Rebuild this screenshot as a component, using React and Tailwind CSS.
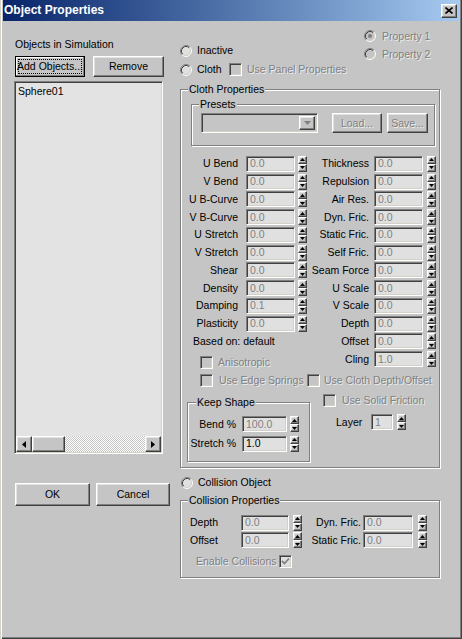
import React from 'react';

const FONT = "font-['Liberation_Sans',Arial,sans-serif]";
const raised =
  'border border-t-white border-l-white border-r-[#404040] border-b-[#404040] shadow-[inset_-1px_-1px_0_#808080,inset_1px_1px_0_#e3e3e3]';
const sunken =
  'border border-t-[#808080] border-l-[#808080] border-r-white border-b-white shadow-[inset_1px_1px_0_#404040,inset_-1px_-1px_0_#d4d0c8]';
const dim = 'text-[#808080] [text-shadow:1px_1px_0_#ececec]';
const group =
  'border border-[#808080] shadow-[inset_1px_1px_0_#fff,1px_1px_0_#fff]';

function Radio({ on, disabled }) {
  return (
    <svg width="12" height="12" viewBox="0 0 12 12" className="shrink-0">
      <circle cx="6" cy="6" r="5" fill={disabled ? '#c5c5c5' : '#e0e0e0'} />
      <path d="M2.11 9.89A5.5 5.5 0 0 1 9.89 2.11" stroke="#808080" fill="none" />
      <path d="M9.89 2.11A5.5 5.5 0 0 1 2.11 9.89" stroke="#fff" fill="none" />
      <path d="M2.82 9.18A4.5 4.5 0 0 1 9.18 2.82" stroke="#404040" fill="none" />
      <path d="M9.18 2.82A4.5 4.5 0 0 1 2.82 9.18" stroke="#d4d0c8" fill="none" />
      {on && <circle cx="6" cy="6" r="2" fill={disabled ? '#808080' : '#000'} />}
    </svg>
  );
}

function Check({ checked, light }) {
  return (
    <div
      className={`flex h-[13px] w-[13px] shrink-0 items-center justify-center ${sunken} ${
        light ? 'bg-[#e0e0e0]' : 'bg-[#c5c5c5]'
      }`}
    >
      {checked && (
        <svg width="9" height="9" viewBox="0 0 9 9">
          <path d="M1 4l2.5 2.5L8 1.5" stroke="#808080" strokeWidth="1.8" fill="none" />
        </svg>
      )}
    </div>
  );
}

function Spin() {
  return (
    <div className="flex h-[16px] w-[9px] shrink-0 flex-col">
      <div className={`flex h-[8px] items-center justify-center bg-[#c5c5c5] ${raised}`}>
        <svg width="5" height="3" viewBox="0 0 5 3">
          <path d="M2.5 0L5 3H0z" fill="#000" />
        </svg>
      </div>
      <div className={`flex h-[8px] items-center justify-center bg-[#c5c5c5] ${raised}`}>
        <svg width="5" height="3" viewBox="0 0 5 3">
          <path d="M0 0h5L2.5 3z" fill="#000" />
        </svg>
      </div>
    </div>
  );
}

function Field({ value, className = 'w-[49px]', dark }) {
  return (
    <div
      className={`flex h-[16px] shrink-0 items-center bg-[#e0e0e0] pl-[3px] ${sunken} ${className} ${
        dark ? 'text-black' : 'text-[#808080]'
      }`}
    >
      {value}
    </div>
  );
}

function Btn({ children, className = '', disabled }) {
  return (
    <div
      className={`flex shrink-0 items-center justify-center whitespace-nowrap bg-[#c5c5c5] ${raised} ${className} ${
        disabled ? dim : ''
      }`}
    >
      {children}
    </div>
  );
}

const leftRows = [
  ['U Bend', '0.0'],
  ['V Bend', '0.0'],
  ['U B-Curve', '0.0'],
  ['V B-Curve', '0.0'],
  ['U Stretch', '0.0'],
  ['V Stretch', '0.0'],
  ['Shear', '0.0'],
  ['Density', '0.0'],
  ['Damping', '0.1'],
  ['Plasticity', '0.0'],
];

const rightRows = [
  ['Thickness', '0.0'],
  ['Repulsion', '0.0'],
  ['Air Res.', '0.0'],
  ['Dyn. Fric.', '0.0'],
  ['Static Fric.', '0.0'],
  ['Self Fric.', '0.0'],
  ['Seam Force', '0.0'],
  ['U Scale', '0.0'],
  ['V Scale', '0.0'],
  ['Depth', '0.0'],
  ['Offset', '0.0'],
  ['Cling', '1.0'],
];

export default function App() {
  return (
    <div
      className={`${FONT} h-[639px] w-[462px] overflow-hidden bg-[#c5c5c5] text-[10.5px] leading-[13px] text-black shadow-[inset_1px_0_0_#d4d0c8,inset_2px_0_0_#fff,inset_-1px_-1px_0_#404040,inset_-2px_-2px_0_#808080]`}
    >
      {/* Title bar */}
      <div className="mx-[3px] flex h-[21px] items-center bg-gradient-to-r from-[#0a246a] to-[#a6caf0] px-[1px]">
        <span className="whitespace-nowrap text-[12px] font-bold text-white">Object Properties</span>
        <div className={`ml-auto mr-[1px] flex h-[14px] w-[16px] items-center justify-center bg-[#c5c5c5] ${raised}`}>
          <svg width="8" height="7" viewBox="0 0 8 7">
            <path d="M0.5 0.5l7 6M7.5 0.5l-7 6" stroke="#000" strokeWidth="1.6" />
          </svg>
        </div>
      </div>

      <div className="flex">
        {/* Left column */}
        <div className="ml-[14px] flex w-[160px] flex-col">
          <div className="mt-[17px] whitespace-nowrap pl-[1px]">Objects in Simulation</div>
          <div className="mt-[5px] flex pl-[1px]">
            <div className="flex h-[21px] w-[70px] items-center justify-center border border-black bg-[#c5c5c5] p-[2px] shadow-[inset_-1px_-1px_0_#808080,inset_1px_1px_0_#fff]">
              <span className="flex h-full w-full items-center justify-center whitespace-nowrap border border-dotted border-black">
                Add Objects...
              </span>
            </div>
            <Btn className="ml-[8px] h-[21px] w-[71px]">Remove</Btn>
          </div>
          <div className={`mt-[4px] flex h-[373px] w-[149px] flex-col bg-[#e3e3e3] ${sunken} p-[1px]`}>
            <div className="flex-1 pl-[2px] pt-[2px]">Sphere01</div>
            <div className="flex h-[16px]">
              <Btn className="h-[16px] w-[16px]">
                <svg width="4" height="7" viewBox="0 0 4 7">
                  <path d="M4 0v7L0 3.5z" fill="#000" />
                </svg>
              </Btn>
              <Btn className="h-[16px] w-[33px]" />
              <div className="flex-1 bg-[repeating-conic-gradient(#c5c5c5_0_25%,#fff_0_50%)] bg-[length:2px_2px]" />
              <Btn className="h-[16px] w-[16px]">
                <svg width="4" height="7" viewBox="0 0 4 7">
                  <path d="M0 0v7L4 3.5z" fill="#000" />
                </svg>
              </Btn>
            </div>
          </div>
          <div className="mt-[29px] flex pl-[1px]">
            <Btn className="h-[23px] w-[75px]">OK</Btn>
            <Btn className="ml-[6px] h-[23px] w-[74px]">Cancel</Btn>
          </div>
        </div>

        {/* Right column */}
        <div className="ml-[6px] w-[261px]">
          {/* Top radios */}
          <div className="flex h-[62px]">
            <div className="mt-[20px] flex w-[184px] flex-col">
              <div className="flex h-[19px] items-center">
                <Radio />
                <span className="ml-[5px]">Inactive</span>
              </div>
              <div className="flex h-[19px] items-center">
                <Radio />
                <span className="ml-[5px] w-[32px]">Cloth</span>
                <Check />
                <span className={`ml-[5px] whitespace-nowrap ${dim}`}>Use Panel Properties</span>
              </div>
            </div>
            <div className="mt-[6px] flex flex-col">
              <div className="flex h-[18px] items-center">
                <Radio on disabled />
                <span className={`ml-[6px] whitespace-nowrap ${dim}`}>Property 1</span>
              </div>
              <div className="flex h-[18px] items-center">
                <Radio disabled />
                <span className={`ml-[6px] whitespace-nowrap ${dim}`}>Property 2</span>
              </div>
            </div>
          </div>

          {/* Cloth Properties */}
          <fieldset className={`w-[260px] p-0 pb-[5px] ${group}`}>
            <legend className="ml-[7px] bg-[#c5c5c5] px-[1px]">Cloth Properties</legend>

            <fieldset className={`ml-[10px] mt-[2px] w-[244px] p-0 pb-[12px] ${group}`}>
              <legend className="ml-[7px] bg-[#c5c5c5] px-[1px]">Presets</legend>
              <div className="mt-[2px] flex">
                <div className={`ml-[9px] flex h-[20px] w-[117px] justify-end bg-[#c5c5c5] p-[2px] ${sunken}`}>
                  <div className={`flex h-full w-[16px] items-center justify-center bg-[#c5c5c5] ${raised}`}>
                    <svg width="7" height="4" viewBox="0 0 7 4">
                      <path d="M0 0h7L3.5 4z" fill="#808080" />
                    </svg>
                  </div>
                </div>
                <Btn disabled className="ml-[14px] h-[20px] w-[50px]">
                  Load...
                </Btn>
                <Btn disabled className="ml-[5px] h-[20px] w-[41px]">
                  Save...
                </Btn>
              </div>
            </fieldset>

            <div className="mt-[9px] flex items-start">
              <div className="flex w-[126px] flex-col">
                {leftRows.map(([label, value]) => (
                  <div key={label} className="flex h-[17.75px] items-center">
                    <span className="w-[57px] whitespace-nowrap text-right">{label}</span>
                    <div className="ml-[8px]">
                      <Field value={value} />
                    </div>
                    <div className="ml-[3px]">
                      <Spin />
                    </div>
                  </div>
                ))}
                <div className="flex h-[17.75px] items-center whitespace-nowrap pl-[12px]">Based on: default</div>
                <div className="mt-[3px] flex h-[18px] items-center pl-[19px]">
                  <Check />
                  <span className={`ml-[5px] ${dim}`}>Anisotropic</span>
                </div>
              </div>
              <div className="flex flex-col">
                {rightRows.map(([label, value]) => (
                  <div key={label} className="flex h-[17.75px] items-center">
                    <span className="w-[62px] whitespace-nowrap text-right">{label}</span>
                    <div className="ml-[5px]">
                      <Field value={value} />
                    </div>
                    <div className="ml-[4px]">
                      <Spin />
                    </div>
                  </div>
                ))}
              </div>
            </div>

            <div className="flex h-[18px] items-center">
              <div className="flex w-[126px] items-center pl-[19px]">
                <Check />
                <span className={`ml-[6px] whitespace-nowrap ${dim}`}>Use Edge Springs</span>
              </div>
              <Check />
              <span className={`ml-[4px] whitespace-nowrap ${dim}`}>Use Cloth Depth/Offset</span>
            </div>

            <div className="flex items-start">
              <fieldset className={`ml-[6px] mt-[7px] w-[123px] p-0 pb-[8px] ${group}`}>
                <legend className="ml-[8px] bg-[#c5c5c5] px-[1px]">Keep Shape</legend>
                <div className="mt-[6px] flex h-[18px] items-center">
                  <span className="w-[48px] text-right">Bend %</span>
                  <div className="ml-[6px]">
                    <Field value="100.0" className="w-[45px]" />
                  </div>
                  <div className="ml-[3px]">
                    <Spin />
                  </div>
                </div>
                <div className="mt-[1.5px] flex h-[18px] items-center">
                  <span className="w-[48px] whitespace-nowrap text-right">Stretch %</span>
                  <div className="ml-[6px]">
                    <Field value="1.0" className="w-[45px]" dark />
                  </div>
                  <div className="ml-[3px]">
                    <Spin />
                  </div>
                </div>
              </fieldset>
              <div className="flex flex-col">
                <div className="ml-[13px] mt-[2px] flex h-[18px] items-center">
                  <Check />
                  <span className={`ml-[6px] whitespace-nowrap ${dim}`}>Use Solid Friction</span>
                </div>
                <div className="ml-[26px] mt-[4px] flex h-[18px] items-center">
                  <span className="w-[26px]">Layer</span>
                  <div className="ml-[9px]">
                    <Field value="1" className="w-[22px]" />
                  </div>
                  <div className="ml-[4px]">
                    <Spin />
                  </div>
                </div>
              </div>
            </div>
          </fieldset>

          {/* Collision */}
          <div className="mt-[6px] flex h-[18px] items-center pl-[1px]">
            <Radio />
            <span className="ml-[5px] whitespace-nowrap">Collision Object</span>
          </div>
          <fieldset className={`mt-[2px] w-[260px] p-0 pb-[6px] ${group}`}>
            <legend className="ml-[7px] bg-[#c5c5c5] px-[1px]">Collision Properties</legend>
            {[
              ['Depth', 'Dyn. Fric.'],
              ['Offset', 'Static Fric.'],
            ].map(([a, b], i) => (
              <div key={a} className={`flex h-[17.5px] items-center ${i === 0 ? 'mt-[7px]' : ''}`}>
                <span className="ml-[9px] w-[51px]">{a}</span>
                <Field value="0.0" className="w-[48px]" />
                <div className="ml-[4px]">
                  <Spin />
                </div>
                <span className="w-[59px] whitespace-nowrap text-right">{b}</span>
                <div className="ml-[2px]">
                  <Field value="0.0" className="w-[50px]" />
                </div>
                <div className="ml-[5px]">
                  <Spin />
                </div>
              </div>
            ))}
            <div className="mt-[4px] flex h-[18px] items-center pl-[15px]">
              <span className={`w-[83px] whitespace-nowrap ${dim}`}>Enable Collisions</span>
              <Check checked light />
            </div>
          </fieldset>
        </div>
      </div>
    </div>
  );
}
